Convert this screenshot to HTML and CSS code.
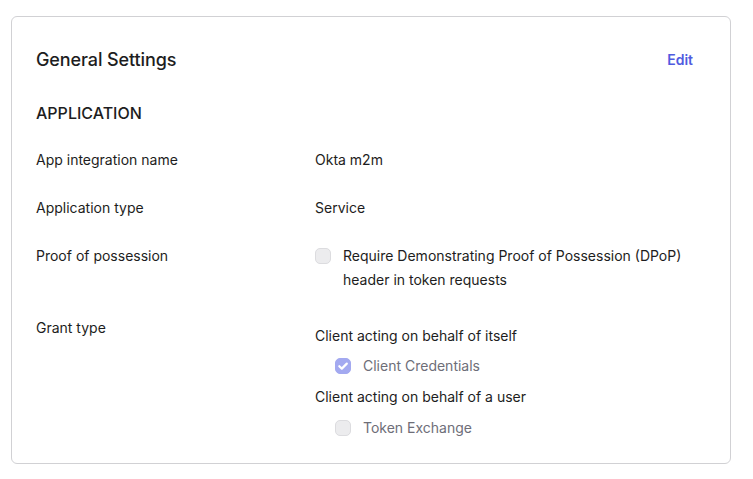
FILE: index.html
```html
<!DOCTYPE html>
<html lang="en">
<head>
<meta charset="utf-8">
<title>General Settings</title>
<link rel="stylesheet" href="styles.css">
</head>
<body>
<section class="card">
  <header class="card-header">
    <h2 class="card-title">General Settings</h2>
    <button class="edit-btn" type="button">Edit</button>
  </header>
  <h3 class="section-title">APPLICATION</h3>
  <dl class="fields">
    <dt>App integration name</dt>
    <dd>Okta m2m</dd>
    <dt>Application type</dt>
    <dd>Service</dd>
    <dt>Proof of possession</dt>
    <dd>
      <label class="check">
        <span class="box"></span>
        <span class="check-text">Require Demonstrating Proof of Possession (DPoP) header in token requests</span>
      </label>
    </dd>
    <dt>Grant type</dt>
    <dd class="grants">
      <div class="legend first">Client acting on behalf of itself</div>
      <label class="check sub disabled">
        <span class="box checked">
          <svg viewBox="0 0 16 16" width="16" height="16"><path d="M4.3 8.2l2.5 2.4 5-5" fill="none" stroke="#fff" stroke-width="2.2" stroke-linecap="round" stroke-linejoin="round"/></svg>
        </span>
        <span class="check-text">Client Credentials</span>
      </label>
      <div class="legend">Client acting on behalf of a user</div>
      <label class="check sub disabled">
        <span class="box"></span>
        <span class="check-text">Token Exchange</span>
      </label>
    </dd>
  </dl>
</section>
</body>
</html>
```

FILE: styles.css
```css
* { box-sizing: border-box; }

html, body {
  margin: 0;
  background: #ffffff;
}

body {
  padding: 16px 22px 16px 11px;
  font-family: Inter, "Noto Sans", "Liberation Sans", sans-serif;
  font-size: 14px;
  line-height: 24px;
  color: #1d1d21;
}

.card {
  width: 720px;
  height: 448px;
  border: 1px solid #d1d1d4;
  border-radius: 6px;
  padding: 25px 24px 24px 24px;
}

.card-header {
  display: flex;
  align-items: center;
  justify-content: space-between;
  height: 36px;
}

.card-title {
  margin: 0;
  font-size: 18px;
  font-weight: 500;
  line-height: 24px;
  letter-spacing: -0.1px;
  color: #1d1d21;
}

.edit-btn {
  border: 0;
  background: none;
  font-family: inherit;
  font-size: 14px;
  font-weight: 600;
  color: #4f5be0;
  padding: 6px 13px 6px 12px;
  line-height: 24px;
  cursor: pointer;
}

.section-title {
  margin: 25px 0 0;
  font-size: 16px;
  font-weight: 500;
  line-height: 20px;
  color: #1d1d21;
}

.fields {
  display: grid;
  grid-template-columns: 279px 1fr;
  row-gap: 24px;
  margin: 25px 0 0;
}

.fields dt, .fields dd {
  margin: 0;
}

.check {
  display: flex;
  align-items: flex-start;
  gap: 12px;
}

.box {
  flex: none;
  width: 16px;
  height: 16px;
  margin-top: 4px;
  border-radius: 5px;
  border: 1px solid #dcdcdf;
  background: #ececee;
  display: flex;
  align-items: center;
  justify-content: center;
}

.box.checked {
  border-color: #a3a9f0;
  background: #a3a9f0;
}

.box svg { display: block; flex: none; }

.check.sub {
  margin-left: 20px;
  margin-top: 6px;
}

.check.disabled .check-text {
  color: #6e6e78;
}

.legend { margin-top: 7px; }
.legend.first { margin-top: 8px; }

.grants .legend + .check.sub:last-child { margin-top: 7px; }
```
